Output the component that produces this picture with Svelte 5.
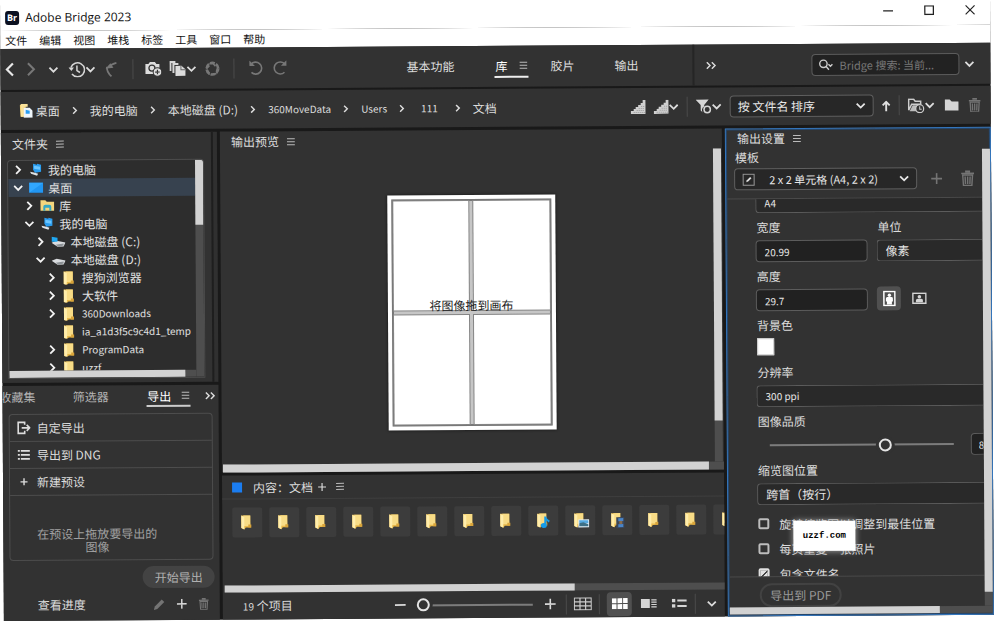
<script>
  const menus = ['文件', '编辑', '视图', '堆栈', '标签', '工具', '窗口', '帮助'];
  const crumbs = ['桌面', '我的电脑', '本地磁盘 (D:)', '360MoveData', 'Users', '111', '文档'];
  const tree = [
    { level: 0, arrow: 'right', icon: 'computer', name: '我的电脑' },
    { level: 0, arrow: 'down', icon: 'desktop', name: '桌面', selected: true },
    { level: 1, arrow: 'right', icon: 'library', name: '库' },
    { level: 1, arrow: 'down', icon: 'computer', name: '我的电脑' },
    { level: 2, arrow: 'right', icon: 'diskWin', name: '本地磁盘 (C:)' },
    { level: 2, arrow: 'down', icon: 'disk', name: '本地磁盘 (D:)' },
    { level: 3, arrow: 'right', icon: 'folder', name: '搜狗浏览器' },
    { level: 3, arrow: 'right', icon: 'folder', name: '大软件' },
    { level: 3, arrow: 'right', icon: 'folder', name: '360Downloads' },
    { level: 3, arrow: '', icon: 'folder', name: 'ia_a1d3f5c9c4d1_temp' },
    { level: 3, arrow: 'right', icon: 'folder', name: 'ProgramData' },
    { level: 3, arrow: 'right', icon: 'folder', name: 'uzzf' }
  ];
  const tiles = ['', '', '', '', '', '', '', '', 'music', 'picture', 'video', '', '', ''];
  const isLatin = (s) => /^[\x00-\x7f]+$/.test(s);
  let quality = $state(64);
  let zoom = $state(0);
</script>

{#snippet chevron(dir, size = 10)}
  <svg class="chev {dir}" width={size} height={size} viewBox="0 0 10 10" aria-hidden="true"><path d="M1 3l4 4 4-4" fill="none" stroke="currentColor" stroke-width="1.8" /></svg>
{/snippet}

{#snippet burger()}
  <svg class="burger" width="8" height="9" viewBox="0 0 8 9" aria-hidden="true"><path d="M0 1.5h8M0 4.5h8M0 7.5h8" stroke="currentColor" /></svg>
{/snippet}

{#snippet plus(size = 11)}
  <svg width={size} height={size} viewBox="0 0 11 11" aria-hidden="true"><path d="M5.5 0v11M0 5.5h11" stroke="currentColor" stroke-width="1.6" /></svg>
{/snippet}

{#snippet trash(w, h)}
  <svg width={w} height={h} viewBox="0 0 13 15" aria-hidden="true"><path d="M0 2.2h13v1.6H0zM4 0h5v2H4z" fill="currentColor" /><path d="M1.6 4.5h9.8L10.7 15H2.3zM4 6l.3 7.5M6.5 6v7.5M9 6l-.3 7.5" fill="none" stroke="currentColor" stroke-width="1.4" /></svg>
{/snippet}

{#snippet folderShape()}
  <path d="M1 1h9v11l1 1H5.5L4 15 1 13.5z" fill="#e9b949" /><path d="M3 1h7v10.5H3z" fill="#f8dc86" /><path d="M1 1l3 1.5V15l-3-1.5z" fill="#ffedab" /><path d="M8 10h3v3H8z" fill="#d9a43a" />
{/snippet}

{#snippet treeIcon(name)}
  <svg width="14" height="14" viewBox="0 0 14 14" aria-hidden="true">
    {#if name === 'computer'}
      <path d="M4 1l4 1 0-1 4 1v7l-6 1-2-3z" fill="#2a9df0" /><path d="M5 3l6 1v3L5 6z" fill="#6cc6ff" /><path d="M1 9l5 1 3 1-1 2-3-1-3-1z" fill="#dfe3e6" />
    {:else if name === 'desktop'}
      <path d="M0 2h14v10H0z" fill="#2196f3" /><path d="M0 2h14L0 12z" fill="#31a7ff" />
    {:else if name === 'library'}
      <path d="M0 3V1.500h5L6.500 3H14v9H0z" fill="#f4d67d" /><path d="M3 12V8q0-2 2-2h4q2 0 2 2v4H9V9H5v3z" fill="#35a8c4" />
    {:else if name === 'folder'}
      {@render folderShape()}
    {:else}
      <path d="M0 8l5-2 9 2-2 4H6z" fill="#dadde0" /><path d="M4 10l8-1v2l-5 1z" fill="#8d9296" />
      {#if name === 'diskWin'}<path d="M0 2l6 1v4L0 7z" fill="#20a8f2" />{/if}
    {/if}
  </svg>
{/snippet}

{#snippet stairs()}
  <svg width="15" height="14" viewBox="0 0 15 14" aria-hidden="true"><path d="M0 14v-3h3V9h2V7h2.500V5H10V3h2V0h3v14z" fill="#cfcfcf" /><path d="M3 12.500h11M6 10.500h8M8 8.500h6M10.500 6.500H14" stroke="#9a9a9a" stroke-dasharray="1 1" /></svg>
{/snippet}

<div class="window">
  <header class="titlebar">
    <div class="brand"><span class="logo">Br</span><span>Adobe Bridge 2023</span></div>
    <div class="caption">
      <button aria-label="最小化"><svg width="10" height="10"><path d="M0 5.500h10" stroke="#222" stroke-width="1.300" /></svg></button>
      <button aria-label="最大化"><svg width="10" height="10"><path d="M.7.700h8.600v8.600H.7z" fill="none" stroke="#222" stroke-width="1.300" /></svg></button>
      <button aria-label="关闭"><svg width="10" height="10"><path d="M.5.500l9 9M9.500.500l-9 9" stroke="#222" stroke-width="1.200" /></svg></button>
    </div>
  </header>
  <nav class="menubar">
    {#each menus as m}<button>{m}</button>{/each}
  </nav>

  <div class="toolbar">
    <div class="nav-tools">
      <button class="w22" aria-label="后退"><svg width="10" height="15" viewBox="0 0 10 15"><path d="M8.500 1.500l-6 6 6 6" fill="none" stroke="#e8e8e8" stroke-width="2.200" /></svg></button>
      <button class="w22" aria-label="前进"><svg width="10" height="15" viewBox="0 0 10 15"><path d="M1.500 1.500l6 6-6 6" fill="none" stroke="#777" stroke-width="2" /></svg></button>
      <button class="w22" aria-label="父级">{@render chevron('down')}</button>
      <button class="w34" aria-label="最近"><svg width="17" height="16" viewBox="0 0 17 16"><path d="M3.500 12.500A7 7 0 1 0 2.500 6" fill="none" stroke="#d5d5d5" stroke-width="1.500" /><path d="M0 6h5.500L3 9.500z" fill="#d5d5d5" /><path d="M8.500 4v5l3 2" fill="none" stroke="#d5d5d5" stroke-width="1.500" /></svg>{@render chevron('down')}</button>
      <button class="w26" aria-label="返回"><svg width="12" height="16" viewBox="0 0 12 16"><path d="M11 1.500Q6 2.500 3.500 6M1.500 5.500q-.5 5 4.500 9.500" fill="none" stroke="#777" stroke-width="1.800" /><path d="M0 7.500L5 2l3 4.500z" fill="#777" /></svg></button>
      <i class="sep"></i>
      <button class="w24" aria-label="从相机获取照片"><svg width="18" height="16" viewBox="0 0 18 16"><path d="M1 3h3l1.500-2h5L12 3h3v4a5 5 0 0 0-5 6H1z" fill="#dcdcdc" /><circle cx="7.500" cy="7" r="3" fill="none" stroke="#333" stroke-width="1.300" /><circle cx="13" cy="11" r="4.300" fill="#dcdcdc" stroke="#333" /><path d="M13 8.700v4.600M10.700 11h4.600" stroke="#333" stroke-width="1.200" /></svg></button>
      <button class="w34" aria-label="优化"><svg width="17" height="16" viewBox="0 0 17 16"><path d="M1 10V1h5M4 12V3h5" fill="none" stroke="#d5d5d5" stroke-width="2" /><path d="M6 5h6l4 3.500V15H6z" fill="#dcdcdc" /><path d="M11.500 5v4H16" fill="none" stroke="#666" /></svg>{@render chevron('down')}</button>
      <button class="w26" aria-label="在 Camera Raw 中打开"><svg width="16" height="16" viewBox="0 0 16 16"><circle cx="8" cy="8" r="5.800" fill="none" stroke="#777" stroke-width="2.600" stroke-dasharray="4.800 1.270" /><path d="M8 2l3 3.500M13.500 6L12 10.500M12 13H8M5 14l-1.500-4M2 8l3-3M5 3l4-.5" stroke="#777" stroke-width="1.500" /></svg></button>
      <i class="sep"></i>
      <button class="w26" aria-label="逆时针旋转"><svg width="15" height="15" viewBox="0 0 15 15"><path d="M2.500 4a6 6 0 1 1 .5 8" fill="none" stroke="#777" stroke-width="1.600" /><path d="M1 0v5.500h5.500z" fill="#777" /></svg></button>
      <button class="w22" aria-label="顺时针旋转"><svg width="15" height="15" viewBox="0 0 15 15"><path d="M12.500 4a6 6 0 1 0-.5 8" fill="none" stroke="#777" stroke-width="1.600" /><path d="M14 0v5.500H8.500z" fill="#777" /></svg></button>
    </div>
    <nav class="spaces">
      <button>基本功能</button>
      <button class="on">库 {@render burger()}</button>
      <button>胶片</button>
      <button>输出</button>
    </nav>
    <div class="search-zone">
      <button class="more" aria-label="更多工作区">{@render chevron('right', 8)}{@render chevron('right', 8)}</button>
      <label class="search">
        <svg width="15" height="12" viewBox="0 0 15 12" aria-hidden="true"><circle cx="5" cy="5" r="3.700" fill="none" stroke="#ccc" stroke-width="1.400" /><path d="M7.500 7.500L10.500 11M10 5.500l2 2 2-2" fill="none" stroke="#ccc" stroke-width="1.400" /></svg>
        <input aria-label="搜索" placeholder="Bridge 搜索: 当前..." />
      </label>
      <button aria-label="搜索选项">{@render chevron('down')}</button>
    </div>
  </div>

  <div class="toolbar path">
    <nav class="crumbs">
      <svg width="13" height="14" viewBox="0 0 13 14" aria-hidden="true"><path d="M0 1h6v12H1z" fill="#f3cf6b" /><path d="M1 0h7v3H4v10H1z" fill="#fbe39a" /><path d="M4 4h6l3 3v7H4z" fill="#eef5fa" /><path d="M6 6l4 1v3L6 10z" fill="#2a9df0" /></svg>
      {#each crumbs as c, i}
        {#if i > 0}{@render chevron('right', 8)}{/if}
        <a href="#{i}" class:latin={isLatin(c)} class:short={c.length === 3}>{c}</a>
      {/each}
    </nav>
    <div class="sorting">
      <button aria-label="缩览图质量">{@render stairs()}</button>
      <button aria-label="评级筛选">{@render stairs()}{@render chevron('down')}</button>
      <i class="sep"></i>
      <button aria-label="筛选"><svg width="16" height="16" viewBox="0 0 16 16"><path d="M0 1h13L8.500 6.500V8A4 4 0 0 0 7 14l-2-2V6.500z" fill="#d5d5d5" /><circle cx="11.500" cy="11" r="3.200" fill="none" stroke="#d5d5d5" stroke-width="1.500" /></svg>{@render chevron('down')}</button>
      <div class="select sort"><select aria-label="排序"><option>按 文件名 排序</option></select>{@render chevron('down')}</div>
      <button class="up" aria-label="升序"><svg width="9" height="11" viewBox="0 0 9 11"><path d="M4.500 11V2M1 5l3.500-3.500L8 5" fill="none" stroke="#e0e0e0" stroke-width="1.900" /></svg></button>
      <i class="sep"></i>
      <button aria-label="打开最近的文件"><svg width="17" height="15" viewBox="0 0 17 15"><path d="M1 12V1h5l1.500 2H13v3M1 12L4 6h9" fill="none" stroke="#ccc" stroke-width="1.500" /><path d="M2 13l3-6h9l-5 6z" fill="#bbb" /><circle cx="12" cy="10.500" r="4" fill="#333" stroke="#ccc" stroke-width="1.300" /><path d="M12 8v3h2" fill="none" stroke="#ccc" /></svg>{@render chevron('down')}</button>
      <button class="new" aria-label="新建文件夹"><svg width="14" height="12" viewBox="0 0 14 12"><path d="M0 0.500h5l2 2h7V11.500H0z" fill="#d5d5d5" /></svg></button>
      <button class="dim" aria-label="删除">{@render trash(12, 14)}</button>
    </div>
  </div>

  <div class="panels">
    <aside class="left">
      <section class="folders">
        <h2>文件夹 {@render burger()}</h2>
        <div class="tree-box">
          <ul class="tree">
            {#each tree as n}
              <li class:selected={n.selected} class="l{n.level}">
                <span class="arrow">{#if n.arrow}{@render chevron(n.arrow)}{/if}</span>
                <span class="ticon">{@render treeIcon(n.icon)}</span>
                <span class:latin={isLatin(n.name)}>{n.name}</span>
              </li>
            {/each}
          </ul>
          <div class="vbar"><div class="thumb third"></div></div>
          <div class="hbar"><div class="thumb most"></div></div>
        </div>
      </section>
      <section class="export">
        <nav class="tabs">
          <button class="cut">收藏集</button>
          <button>筛选器</button>
          <button class="on">导出 {@render burger()}</button>
          <button class="more" aria-label="更多">{@render chevron('right', 8)}{@render chevron('right', 8)}</button>
        </nav>
        <div class="presets">
          <button><svg width="14" height="14" viewBox="0 0 14 14"><path d="M8 4V1.500H1.500v11H8V10M5 7h8M10 4l3 3-3 3" fill="none" stroke="#ddd" stroke-width="1.600" /></svg>自定导出</button>
          <button><svg width="14" height="14" viewBox="0 0 14 14"><path d="M4 3h9M4 7h9M4 11h9" stroke="#ddd" stroke-width="1.700" /><path d="M1 3h2M1 7h2M1 11h2" stroke="#ddd" stroke-width="1.700" /></svg>导出到 DNG</button>
          <button><svg width="14" height="14" viewBox="0 0 14 14"><path d="M7 3.500v7M3.500 7h7" stroke="#ddd" stroke-width="1.400" /></svg>新建预设</button>
          <p>在预设上拖放要导出的<br />图像</p>
        </div>
        <div class="start"><button class="pill">开始导出</button></div>
        <footer>
          <a href="#progress">查看进度</a>
          <button class="dim" aria-label="编辑"><svg width="11" height="11" viewBox="0 0 11 11"><path d="M0 11l1-3.500L8 .5 10.500 3l-7 7z" fill="currentColor" /></svg></button>
          <button aria-label="添加">{@render plus(10)}</button>
          <button class="dim" aria-label="删除预设">{@render trash(10, 12)}</button>
        </footer>
      </section>
    </aside>

    <main>
      <section class="preview">
        <h2>输出预览 {@render burger()}</h2>
        <div class="stage">
          <div class="canvas">
            <div class="sheet">
              <div class="cells"><i class="cell"></i><i class="cell"></i><i class="cell"></i><i class="cell"></i></div>
              <span>将图像拖到画布</span>
            </div>
          </div>
          <div class="vbar"><div class="thumb tall"></div></div>
        </div>
        <div class="hbar"><div class="thumb full"></div></div>
      </section>
      <section class="content">
        <h2><i class="blue"></i>内容：文档 {@render plus(8)} {@render burger()}</h2>
        <div class="tiles">
          {#each tiles as t}
            <div class="tile">
              <svg width="18" height="18" viewBox="0 0 18 18" aria-hidden="true">
                <g transform="translate(2 1)">{@render folderShape()}</g>
                {#if t === 'music'}<path d="M11 5v8.500M11 6q1 2 4 4" fill="none" stroke="#159be8" stroke-width="2" /><ellipse cx="9.500" cy="14" rx="3" ry="2.500" fill="#159be8" />{/if}
                {#if t === 'picture'}<path d="M7 8h11v8H7z" fill="#e4eef5" /><path d="M8 9h9v3H8z" fill="#56a9e0" /><path d="M8 12l4-1 5 2v2H8z" fill="#3c6f86" />{/if}
                {#if t === 'video'}<path d="M8 6h8v11H8z" fill="#39465a" /><path d="M10 7h5v3h-5zM10 13h5v3h-5z" fill="#4a84c7" /><path d="M11 10h3v3h-3z" fill="#8a6b4b" />{/if}
              </svg>
            </div>
          {/each}
        </div>
        <div class="hbar"><div class="thumb seventy"></div></div>
        <footer>
          <span class="count"><span class="latin">19</span> 个项目</span>
          <button aria-label="缩小"><svg width="11" height="11"><path d="M0 5.500h11" stroke="#ddd" stroke-width="1.800" /></svg></button>
          <input class="zoom" type="range" aria-label="缩览图大小" bind:value={zoom} />
          <button aria-label="放大">{@render plus()}</button>
          <i class="sep"></i>
          <button aria-label="锁定网格"><svg width="18" height="13" viewBox="0 0 18 13"><path d="M.5.500h17v12H.5zM6.200.500v12M11.800.500v12M.5 4.500h17M.5 8.500h17" fill="none" stroke="#ccc" stroke-width="1.200" /></svg></button>
          <i class="sep"></i>
          <button class="active" aria-label="缩览图"><svg width="16" height="11" viewBox="0 0 16 11"><path d="M0 0h4.700v5H0zM5.700 0h4.700v5H5.700zM11.300 0H16v5h-4.700zM0 6h4.700v5H0zM5.700 6h4.700v5H5.700zM11.300 6H16v5h-4.700z" fill="#fff" /></svg></button>
          <button aria-label="详细信息"><svg width="16" height="9" viewBox="0 0 16 9"><path d="M0 0h9v9H0z" fill="#d5d5d5" /><path d="M10.500 1H16M10.500 3.300H16M10.500 5.600H16M10.500 8H16" stroke="#d5d5d5" stroke-width="1.200" /></svg></button>
          <button aria-label="列表"><svg width="15" height="9" viewBox="0 0 15 9"><path d="M0 0h3.500v3.500H0zM0 5.500h3.500V9H0z" fill="#d5d5d5" /><path d="M5.500 1.800H15M5.500 7.300H15" stroke="#d5d5d5" stroke-width="2" /></svg></button>
          <i class="sep"></i>
          <button aria-label="更多视图">{@render chevron('down')}</button>
        </footer>
      </section>
    </main>

    <aside class="output">
      <div class="inner">
        <div class="form">
          <h2>输出设置 {@render burger()}</h2>
          <label class="tpl-label" for="tpl">模板</label>
          <div class="tpl">
            <div class="select">
              <svg class="lead" width="13" height="13" viewBox="0 0 13 13" aria-hidden="true"><path d="M1 1h11v11H1z" fill="none" stroke="#999" /><path d="M4 9l.7-2L8 3.700 9.300 5 6 8.300z" fill="#e0e0e0" /></svg>
              <select id="tpl"><option>2 x 2 单元格 (A4, 2 x 2)</option></select>{@render chevron('down')}
            </div>
            <button class="dim" aria-label="新建模板">{@render plus()}</button>
            <button class="dim" aria-label="删除模板">{@render trash(13, 16)}</button>
          </div>
          <div class="scroll">
            <input class="field paper latin" aria-label="纸张" value="A4" />
            <div class="pair">
              <div class="col"><label for="w">宽度</label><input id="w" class="field latin" value="20.99" /></div>
              <div class="col grow"><label for="unit">单位</label><select id="unit" class="field"><option>像素</option></select></div>
            </div>
            <div class="pair">
              <div class="col"><label for="h">高度</label><input id="h" class="field latin" value="29.7" /></div>
              <div class="orient">
                <button class="active" aria-label="纵向"><svg width="13" height="16" viewBox="0 0 13 16"><path d="M1 1h11v14H1z" fill="none" stroke="#fff" stroke-width="1.500" /><circle cx="6.500" cy="4.800" r="1.700" fill="#fff" /><path d="M3 8q0-1.500 1.500-1.500h4Q10 6.500 10 8v3H9v3H4v-3H3z" fill="#fff" /></svg></button>
                <button aria-label="横向"><svg width="15" height="12" viewBox="0 0 15 12"><path d="M1 1h13v10H1z" fill="none" stroke="#d5d5d5" stroke-width="1.400" /><circle cx="7.500" cy="4.500" r="1.800" fill="#d5d5d5" /><path d="M4 10V8q0-1.500 2-1.500h3q2 0 2 1.500v2z" fill="#d5d5d5" /></svg></button>
              </div>
            </div>
            <div class="col"><label for="bg">背景色</label><button id="bg" class="swatch" aria-label="背景色"></button></div>
            <div class="col"><label for="res">分辨率</label><select id="res" class="field open latin"><option>300 ppi</option></select></div>
            <div class="col"><label for="q">图像品质</label>
              <div class="quality"><input id="q" type="range" bind:value={quality} /><input class="field num latin" aria-label="品质" value="80" /></div>
            </div>
            <div class="col"><label for="pos">缩览图位置</label><select id="pos" class="field open"><option>跨首（按行）</option></select></div>
            <div class="checks">
              <label><input type="checkbox" />旋转缩览图以调整到最佳位置</label>
              <label><input type="checkbox" />每页重复一张照片</label>
              <label><input type="checkbox" checked />包含文件名</label>
              <span class="mark">uzzf.com</span>
            </div>
          </div>
          <div class="pdf"><button class="pill outline">导出到 PDF</button></div>
        </div>
        <div class="vbar"><div class="thumb long"></div></div>
      </div>
      <div class="hbar"><div class="thumb eighty"></div></div>
    </aside>
  </div>
</div>

<style>
  :global(body) { background: #fff; overflow: hidden; }
  .window, .window * { box-sizing: border-box; }
  .window {
    display: flex; flex-direction: column;
    width: calc(100% - 4px); height: 100vh; min-height: 560px;
    transform: rotate(-0.36deg); transform-origin: 0 0;
    background: #191919; color: #dcdcdc;
    font: 12px/18px "Noto Sans CJK SC", sans-serif;
  }
  button, input, select { font: inherit; color: inherit; margin: 0; padding: 0; border: 0; background: none; }
  button { display: flex; align-items: center; justify-content: center; white-space: nowrap; flex: none; }
  a { color: inherit; text-decoration: none; white-space: nowrap; }
  svg { display: block; flex: none; }
  h2 { display: flex; align-items: center; gap: 8px; margin: 0; font-size: 12px; font-weight: 400; height: 22px; flex: none; }
  .latin { font-size: 10px; }
  .chev.right { transform: rotate(-90deg); }
  .burger { color: #bbb; }
  .dim { color: #747474; }
  .sep { width: 1px; height: 20px; background: #4b4b4b; flex: none; }

  .titlebar { display: flex; justify-content: space-between; background: #fff; color: #111; height: 31px; padding: 4px 15px 0 5px; flex: none; }
  .brand { display: flex; align-items: center; gap: 6px; }
  .brand span:last-child { font-size: 12px; font-family: "Open Sans", sans-serif; }
  .logo { display: grid; place-items: center; width: 14px; height: 14px; border-radius: 3px; background: #0b1020; color: #fff; font: bold 9px/14px "Open Sans", sans-serif; }
  .caption { display: flex; align-items: center; gap: 31px; height: 24px; }
  .menubar { display: flex; gap: 10px; height: 18px; padding-left: 4px; background: #fff; color: #111; flex: none; }
  .menubar button { font-size: 11px; line-height: 18px; width: 24px; height: 17px; }

  .toolbar { display: flex; align-items: center; height: 41px; margin-bottom: 2px; background: #323232; flex: none; }
  .path { height: 38px; margin-bottom: 3px; }
  .nav-tools { display: flex; align-items: center; flex: none; margin-left: -2px; }
  .w22 { width: 22px; } .w24 { width: 24px; } .w26 { width: 26px; } .w34 { width: 34px; }
  .nav-tools .sep { margin: 0 8px; }
  .spaces { display: flex; align-items: center; margin: 0 54px 0 auto; }
  .spaces button { height: 24px; margin-bottom: 2px; border-bottom: 2px solid transparent; border-top: 2px solid transparent; }
  .spaces button + button { margin-left: 40px; }
  .spaces .on { gap: 12px; border-bottom-color: #eee; color: #fff; padding: 0 1px; }
  .spaces .on + button { margin-left: 22px; }
  .search-zone { display: flex; align-items: center; gap: 5px; width: 298px; height: 41px; padding-right: 16px; border-left: 2px solid #252525; flex: none; }
  .more { display: flex; }
  .more .chev + :global(.chev) { margin-left: -3px; }
  .search-zone .more { margin: 0 auto 0 10px; }
  .search { display: flex; align-items: center; gap: 6px; width: 148px; height: 22px; padding: 0 6px; border: 1px solid #5c5c5c; border-radius: 4px; background: #222; }
  .search input { min-width: 0; flex: 1; font-size: 11px; outline: 0; }
  .search input::placeholder { color: #777; opacity: 1; }

  .crumbs { display: flex; align-items: center; gap: 11px; padding-left: 19px; }
  .crumbs > svg:first-child { margin-right: -8px; }
  .crumbs .short { margin: 0 5px 0 4px; }
  .sorting { display: flex; align-items: center; gap: 8px; margin-left: auto; padding-right: 10px; }
  .sorting .up { width: 9px; }
  .sorting .new { margin: 0 2px; }
  .select { display: flex; align-items: center; height: 22px; border: 1px solid #5f5f5f; border-radius: 4px; background: #272727; padding: 0 7px; color: #e6e6e6; }
  select { appearance: none; min-width: 0; flex: 1; outline: 0; }
  .sort { width: 144px; }

  .panels { display: grid; grid-template-columns: 216px minmax(0, 1fr) 266px; gap: 3px; flex: 1; min-height: 0; }
  .left, main { display: flex; flex-direction: column; gap: 3px; min-height: 0; min-width: 0; }
  .left section, main section { background: #323232; display: flex; flex-direction: column; min-height: 0; }
  .folders { height: 250px; flex: none; padding: 0 6px; box-shadow: inset -4px 0 #303030, inset -6px 0 #1e1e1e; }
  .folders h2 { padding-left: 5px; margin: 0 0 5px; }
  .tree-box { display: grid; grid-template: minmax(0, 1fr) 7px / minmax(0, 1fr) 8px; width: 197px; height: 219px; border: 1px solid #4d4d4d; border-radius: 4px 4px 0 0; background: #2d2d2d; overflow: hidden; }
  .tree { list-style: none; margin: 0; padding: 0; overflow: hidden; }
  .tree li { display: flex; align-items: center; height: 18px; padding-left: 5px; white-space: nowrap; color: #e0e0e0; }
  .tree li.selected { background: #37424f; }
  .tree li.l1 { padding-left: 16px; } .tree li.l2 { padding-left: 27px; } .tree li.l3 { padding-left: 38px; }
  .arrow { width: 16px; flex: none; color: #f2f2f2; } .ticon { width: 19px; flex: none; }
  .vbar, .hbar { background: #4e4e4e; flex: none; }
  .vbar { width: 8px; } .hbar { height: 7px; }
  .tree-box .vbar { grid-row: 1 / 3; grid-column: 2; }
  .thumb { background: #d2d2d2; height: 100%; }
  .third { height: 30%; } .most { width: 94%; }

  .export { flex: 1; }
  .tabs { display: flex; justify-content: space-between; height: 28px; align-items: center; padding: 0 2px 5px 0; overflow: hidden; color: #b5b5b5; flex: none; }
  .tabs button { height: 21px; border-bottom: 2px solid transparent; }
  .tabs .cut { margin-left: -3px; }
  .tabs .on { gap: 10px; padding: 0 1px; color: #fff; border-color: #ccc; margin-right: -24px; }
  .tabs .more { color: #ddd; }
  .presets { margin: 0 6px; flex: 1; border: 1px solid #4d4d4d; border-radius: 4px; }
  .presets button { width: 100%; height: 27px; justify-content: flex-start; gap: 6px; padding-left: 7px; border-bottom: 1px solid #4d4d4d; }
  .presets p { margin: 31px 28px 0 0; text-align: center; line-height: 13px; color: #a0a0a0; }
  .start { display: flex; justify-content: flex-end; padding: 6px 5px 0; }
  .pill { height: 22px; width: 72px; border-radius: 11px; background: #434343; color: #b0b0b0; }
  .left footer { display: flex; align-items: center; height: 32px; gap: 12px; padding: 0 11px 0 34px; }
  .left footer a { margin-right: auto; }

  .preview { flex: 1; }
  .preview h2 { padding-left: 11px; height: 20px; }
  .stage { display: flex; flex: 1; min-height: 0; }
  .canvas { flex: 1; display: grid; place-items: center; padding: 12px 0 0 8px; }
  .sheet { position: relative; width: 168px; height: 235px; padding: 4px; background: #fff; box-shadow: 0 0 3px #111; }
  .cells { display: grid; grid-template: 1fr 1fr / 1fr 1fr; gap: 5px; height: 100%; border: 2px solid #777; background: #c6c6c6; }
  .cell { background: #fff; box-shadow: 0 0 0 1px #858585; }
  .sheet span { position: absolute; left: 0; right: 0; top: 101px; text-align: center; color: #222; }
  .stage .vbar { margin-right: 1px; }
  .tall { height: 87%; }
  .preview .hbar { height: 8px; margin-left: 1px; }
  .full { width: 97%; }

  .content { height: 144px; flex: none; }
  .content h2 { height: 24px; gap: 5px; padding-left: 10px; border-bottom: 1px solid #3f3f3f; }
  .content h2 :global(.burger) { margin-left: 5px; }
  .blue { width: 10px; height: 10px; background: #1b7df0; margin-right: 6px; }
  .tiles { display: flex; gap: 7px; padding: 8px 0 0 10px; height: 86px; overflow: hidden; }
  .tile { display: grid; place-items: center; width: 30px; height: 30px; border-radius: 2px; background: #3c3c3c; flex: none; }
  .content .hbar { margin-left: 2px; }
  .seventy { width: 70%; }
  .content footer { display: flex; align-items: center; gap: 8px; flex: 1; padding: 0 4px 0 20px; }
  .content footer .sep { margin: 0 -1px; }
  .count { margin-right: auto; }
  .content footer button { min-width: 18px; height: 24px; }
  .content footer .active { width: 25px; }
  .active { background: #505050; border-radius: 4px; }
  .content footer .active + button { margin: 0 4px 0 0; }

  input[type="range"] { appearance: none; height: 22px; min-width: 0; background: linear-gradient(#7c7c7c, #7c7c7c) center / 100% 2px no-repeat; outline: 0; }
  input[type="range"]::-webkit-slider-thumb { appearance: none; width: 13px; height: 13px; border: 2px solid #e4e4e4; border-radius: 50%; background: #323232; box-shadow: 0 0 0 3px #323232; }
  .zoom { width: 116px; }

  .output { display: flex; flex-direction: column; background: #323232; border: 1px solid #3476bd; min-height: 0; box-shadow: inset 0 0 0 1px #24476e; padding: 1px 0 1px 1px; }
  .inner { display: flex; flex: 1; min-height: 0; }
  .form { flex: 1; min-width: 0; display: flex; flex-direction: column; }
  .form h2 { height: 16px; padding-left: 10px; }
  .tpl-label { padding: 2px 0 0 8px; height: 22px; }
  .tpl { display: flex; align-items: center; gap: 14px; padding: 0 8px 8px 7px; border-bottom: 1px solid #4a4a4a; }
  .tpl .select { width: 183px; gap: 14px; font-size: 11px; }
  .tpl .dim:last-child { margin-left: 5px; }
  .scroll { flex: 1; min-height: 0; overflow: hidden; display: flex; flex-direction: column; gap: 4px; padding-left: 28px; }
  .field { height: 22px; flex: none; border: 1px solid #5c5c5c; border-radius: 4px; background: #212121; padding: 0 8px; color: #e6e6e6; outline: 0; }
  .paper, .open, select.field { border-right: 0; border-radius: 4px 0 0 4px; background: #292929; }
  .paper { margin-top: -8px; }
  .pair { display: flex; gap: 9px; }
  .col { display: flex; flex-direction: column; gap: 3px; }
  .col label { height: 20px; line-height: 20px; padding-left: 1px; }
  .pair .col .field { width: 112px; }
  .grow { flex: 1; min-width: 0; }
  .pair .grow .field { width: auto; }
  .orient { display: flex; align-items: flex-end; gap: 6px; }
  .orient button { width: 24px; height: 24px; }
  .swatch { width: 17px; height: 17px; margin: 0 0 3px 1px; background: #fff; border: 1px solid #ccc; }
  .quality { display: flex; padding-left: 13px; overflow: hidden; }
  .quality [type="range"] { width: 184px; flex: none; }
  .num { width: 34px; margin-left: 17px; padding: 0 7px; }
  .checks { position: relative; margin-top: 2px; }
  .checks label { display: flex; align-items: center; gap: 10px; height: 25px; white-space: nowrap; padding-left: 1px; }
  .checks input { appearance: none; width: 11px; height: 11px; border: 2px solid #bdbdbd; border-radius: 2px; flex: none; }
  .checks input:checked { background: linear-gradient(135deg, #e0e0e0 45%, #444 45% 60%, #e0e0e0 60%); border-color: #e0e0e0; }
  .mark { position: absolute; left: 36px; top: 10px; width: 62px; height: 30px; background: #fff; color: #000; box-shadow: 0 0 6px #aaa; text-align: center; font: bold 9px/30px "Liberation Mono", monospace; }
  .pdf { height: 31px; padding: 6px 0 0 30px; border-top: 1px solid #4a4a4a; overflow: hidden; flex: none; }
  .outline { width: 82px; height: 24px; border: 2px solid #424242; background: none; color: #999; border-radius: 12px; }
  .output .vbar { margin: 20px 0 0; }
  .long { height: 97%; } .eighty { width: 80%; }
</style>
